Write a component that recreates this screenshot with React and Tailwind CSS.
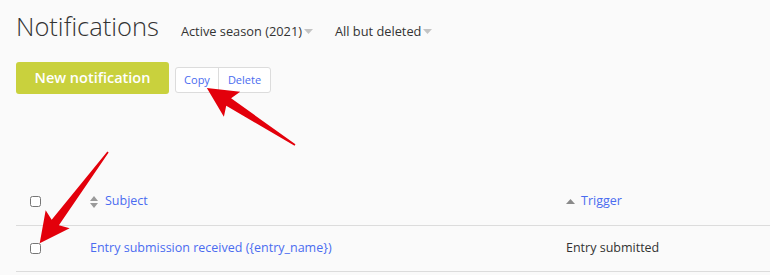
import { useState } from 'react'

function Caret() {
  return (
    <svg width="9" height="5" viewBox="0 0 9 5" className="ml-[2px] inline-block">
      <path d="M0 0h9L4.5 5z" fill="#c4c4c4" />
    </svg>
  )
}

function SortBoth() {
  return (
    <svg width="8" height="12" viewBox="0 0 8 12" className="inline-block">
      <path d="M0 5L4 0l4 5z M0 7h8l-4 5z" fill="#9a9a9a" />
    </svg>
  )
}

function SortUp() {
  return (
    <svg width="9" height="5" viewBox="0 0 9 5" className="inline-block">
      <path d="M0 5L4.5 0 9 5z" fill="#8a8a8a" />
    </svg>
  )
}

// red callout arrow, drawn pointing right then rotated into place
function Arrow({ x, y, angle, length }) {
  const L = length
  const pts = `0,-0.8 ${L - 26},-4.5 ${L - 30},-15 ${L},0 ${L - 30},15 ${L - 26},4.5 0,0.8`
  return (
    <g transform={`translate(${x} ${y}) rotate(${angle})`}>
      <polygon points={pts} fill="#e3000b" />
    </g>
  )
}

export default function App() {
  const [checked, setChecked] = useState({ all: false, row: false })

  return (
    <div className="relative min-h-[275px] w-[770px] overflow-hidden bg-[#fafafa] font-['Open_Sans',sans-serif] text-[#333]">
      <div className="px-4 pt-[6px]">
        <div className="flex items-baseline">
          <h1 className="text-[25.5px] font-light leading-[40px] text-[#333]">Notifications</h1>
          <button className="ml-[22px] flex items-center text-[12.8px] text-[#333]">
            Active season (2021)
            <Caret />
          </button>
          <button className="ml-[22px] flex items-center text-[12.8px] text-[#333]">
            All but deleted
            <Caret />
          </button>
        </div>

        <div className="mt-[16px] flex items-start">
          <button className="h-[32px] w-[153px] rounded-[3px] bg-[#c9d13d] text-[14.5px] font-semibold text-white">
            New notification
          </button>
          <div className="ml-[6px] mt-[5px] flex h-[26px] rounded-[3px] border border-[#dcdcdc] bg-white text-[11px] text-[#4a6cf0]">
            <button className="w-[43px] border-r border-[#dcdcdc]">Copy</button>
            <button className="w-[51px]">Delete</button>
          </div>
        </div>

        <table className="mt-[85px] w-[754px] border-collapse text-[12.5px]">
          <thead>
            <tr className="h-[46px] border-b border-[#dcdcdc]">
              <th className="w-[74px] pl-[14px] text-left align-middle">
                <input
                  type="checkbox"
                  checked={checked.all}
                  onChange={() => setChecked({ ...checked, all: !checked.all })}
                  className="block h-[11px] w-[11px]"
                />
              </th>
              <th className="w-[476px] text-left font-normal">
                <span className="flex items-center gap-[7px] text-[#4a6cf0]">
                  <SortBoth />
                  Subject
                </span>
              </th>
              <th className="text-left font-normal">
                <span className="flex items-center gap-[6px] text-[#4a6cf0]">
                  <SortUp />
                  Trigger
                </span>
              </th>
            </tr>
          </thead>
          <tbody>
            <tr className="h-[46px] border-b border-[#dcdcdc]">
              <td className="pl-[14px]">
                <input
                  type="checkbox"
                  checked={checked.row}
                  onChange={() => setChecked({ ...checked, row: !checked.row })}
                  className="block h-[11px] w-[11px]"
                />
              </td>
              <td>
                <a href="#" className="text-[#4a6cf0]">Entry submission received ({'{'}entry_name{'}'})</a>
              </td>
              <td className="text-[#333]">Entry submitted</td>
            </tr>
          </tbody>
        </table>
      </div>

      <svg className="pointer-events-none absolute left-0 top-0" width="770" height="275">
        <Arrow x={295} y={145} angle={212.9} length={105} />
        <Arrow x={108} y={152} angle={126.8} length={114} />
      </svg>
    </div>
  )
}
